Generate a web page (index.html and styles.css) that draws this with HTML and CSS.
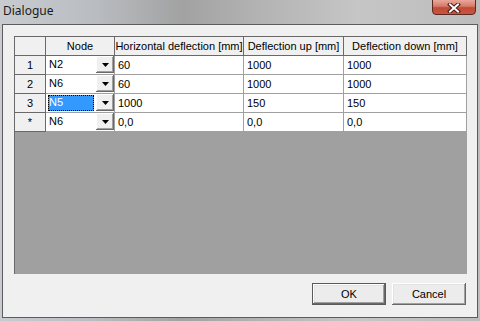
FILE: index.html
```html
<!DOCTYPE html>
<html lang="en">
<head>
    <meta charset="UTF-8">
    <title>Dialogue</title>
    <link rel="stylesheet" href="styles.css">
</head>
<body>
<div class="window">
    <div class="titlebar">
        <span class="title">Dialogue</span>
        <div class="close">
            <svg width="14" height="10" viewBox="0 0 14 10">
                <path d="M3,1.5 L11,8.5 M11,1.5 L3,8.5" stroke="#4a1810" stroke-width="4" stroke-linecap="square"/>
                <path d="M3,1.5 L11,8.5 M11,1.5 L3,8.5" stroke="#ffffff" stroke-width="2" stroke-linecap="square"/>
            </svg>
        </div>
    </div>

    <div class="client">
        <!-- Node grid -->
        <div class="grid">
            <div class="row head">
                <div class="cell corner"></div>
                <div class="cell hcell">Node</div>
                <div class="cell hcell">Horizontal deflection [mm]</div>
                <div class="cell hcell">Deflection up [mm]</div>
                <div class="cell hcell">Deflection down [mm]</div>
            </div>
            <div class="row">
                <div class="cell rhead">1</div>
                <div class="cell combo"><span class="val">N2</span><span class="drop"><svg width="7" height="4"><polygon points="0,0 7,0 3.5,4" fill="#000"/></svg></span></div>
                <div class="cell">60</div>
                <div class="cell">1000</div>
                <div class="cell">1000</div>
            </div>
            <div class="row">
                <div class="cell rhead">2</div>
                <div class="cell combo"><span class="val">N6</span><span class="drop"><svg width="7" height="4"><polygon points="0,0 7,0 3.5,4" fill="#000"/></svg></span></div>
                <div class="cell">60</div>
                <div class="cell">1000</div>
                <div class="cell">1000</div>
            </div>
            <div class="row">
                <div class="cell rhead">3</div>
                <div class="cell combo"><span class="val selected">N5</span><span class="drop"><svg width="7" height="4"><polygon points="0,0 7,0 3.5,4" fill="#000"/></svg></span></div>
                <div class="cell">1000</div>
                <div class="cell">150</div>
                <div class="cell">150</div>
            </div>
            <div class="row">
                <div class="cell rhead">*</div>
                <div class="cell combo"><span class="val">N6</span><span class="drop"><svg width="7" height="4"><polygon points="0,0 7,0 3.5,4" fill="#000"/></svg></span></div>
                <div class="cell">0,0</div>
                <div class="cell">0,0</div>
                <div class="cell">0,0</div>
            </div>
        </div>

        <div class="buttons">
            <button class="btn default">OK</button>
            <button class="btn">Cancel</button>
        </div>
    </div>
</div>
</body>
</html>
```

FILE: styles.css
```css
* {
    box-sizing: border-box;
}
body {
    margin: 0;
    width: 480px;
    height: 321px;
    overflow: hidden;
}
.window {
    width: 480px;
    height: 321px;
    display: flex;
    flex-direction: column;
    background: linear-gradient(to right, #c8ccd0 0%, #b9bcc0 20%, #a2a2a2 38%, #b4b4b4 55%, #c6c6c6 75%, #bcbcbc 100%);
}
.titlebar {
    height: 24px;
    display: flex;
    justify-content: space-between;
    align-items: flex-start;
    padding: 0 4px 0 3px;
}
.title {
    font-family: "Noto Sans", sans-serif;
    font-size: 12px;
    color: #1a1a1a;
    margin-top: 2px;
}
.close {
    width: 44px;
    height: 16px;
    margin-top: -1px;
    border: 1px solid #5a2a22;
    border-radius: 0 0 4px 4px;
    background: linear-gradient(to bottom, #e9a89a 0%, #d67a68 45%, #c04a36 55%, #c9553f 100%);
    display: flex;
    align-items: center;
    justify-content: center;
    padding-top: 1px;
}
.client {
    flex: 1;
    margin: 0 2px 3px 2px;
    border: 1px solid #5c5c5c;
    background: #f0f0f0;
    padding: 11px 11px 12px 11px;
    display: flex;
    flex-direction: column;
}
.grid {
    width: 453px;
    height: 238px;
    background: #a0a0a0;
    border-left: 1px solid #696969;
    border-top: 1px solid #696969;
    font-family: "Liberation Sans", Arial, sans-serif;
    font-size: 11px;
    color: #000;
}
.row {
    display: grid;
    grid-template-columns: 31px 69px 129px 100px 123px;
    height: 19px;
}
.cell {
    background: #fff;
    border-right: 1px solid #a0a0a0;
    border-bottom: 1px solid #a0a0a0;
    padding: 0 3px;
    line-height: 18px;
    white-space: nowrap;
    overflow: hidden;
}
.hcell, .corner, .rhead {
    background: #f0f0f0;
    border-right-color: #696969;
    border-bottom-color: #696969;
    text-align: center;
}
.hcell {
    padding: 0;
}
.combo {
    display: flex;
    align-items: center;
    padding: 0 0 0 2px;
}
.val {
    flex: 1;
    height: 16px;
    line-height: 15px;
    padding-left: 1px;
}
.val.selected {
    flex: none;
    width: 46px;
    margin-right: 2px;
    background: #3399ff;
    color: #fff;
    outline: 1px dotted #000;
    outline-offset: -1px;
}
.drop {
    width: 18px;
    height: 17px;
    margin-top: -1px;
    background: #f0f0f0;
    box-shadow: inset -1px -1px #696969, inset 1px 1px #ffffff, inset -2px -2px #a0a0a0;
    display: flex;
    align-items: center;
    justify-content: center;
}
.buttons {
    margin-top: 9px;
    display: flex;
    justify-content: flex-end;
    gap: 6px;
    padding-right: 0;
}
.btn {
    width: 74px;
    height: 22px;
    font-family: "Liberation Sans", Arial, sans-serif;
    font-size: 11px;
    color: #000;
    background: #ececec;
    border: none;
    padding: 0;
    box-shadow: inset -1px -1px #696969, inset 1px 1px #ffffff, inset -2px -2px #a0a0a0, inset 2px 2px #e3e3e3;
}
.btn.default {
    border: 1px solid #5a5a5a;
}
```
